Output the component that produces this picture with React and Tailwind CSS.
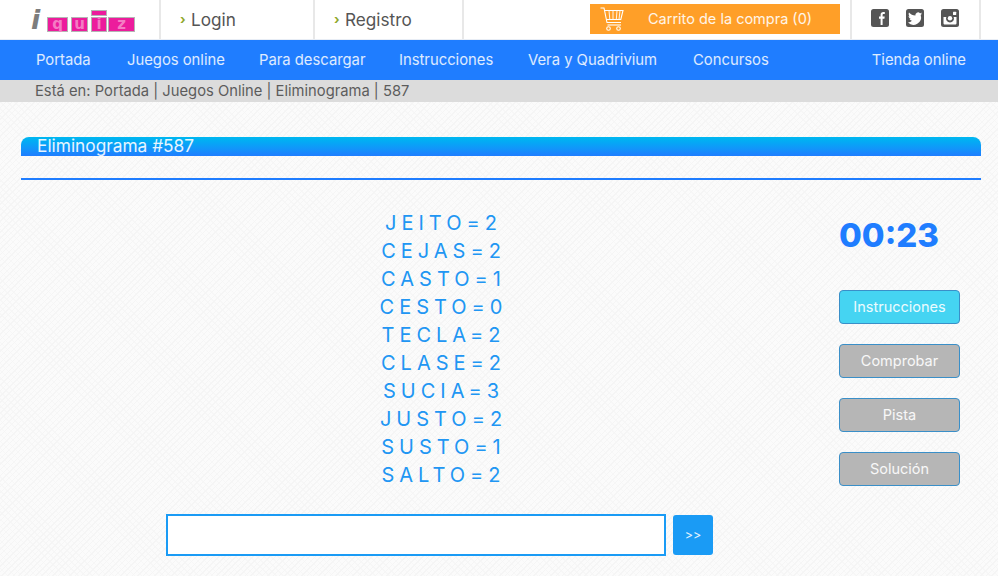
const font = { fontFamily: 'Inter, "Noto Sans", sans-serif' };

function LogoBlock({ className, children }) {
  return (
    <span className={`flex items-center justify-center bg-[#ec1c9c] border border-[#b4b4b4] text-[15px] font-bold leading-none text-[#f47cc4] ${className}`}>
      {children}
    </span>
  );
}

function Logo() {
  return (
    <div className="flex items-end h-[24px] w-[107px] select-none" style={{ fontFamily: '"DejaVu Sans", sans-serif' }}>
      <span className="w-[16px] text-[27px] font-bold italic text-[#7d7d7d] leading-[24px]">i</span>
      <LogoBlock className="w-[21px] h-[15px]">q</LogoBlock>
      <LogoBlock className="w-[17px] h-[15px] ml-[3px]">u</LogoBlock>
      <div className="w-[16px] ml-[3px] flex flex-col items-center gap-[1px]">
        <span className="block w-[16px] h-[6px] bg-[#ec1c9c] border border-[#b4b4b4]" />
        <LogoBlock className="w-[16px] h-[15px]">i</LogoBlock>
      </div>
      <LogoBlock className="w-[27px] h-[15px] ml-[1px]">z</LogoBlock>
    </div>
  );
}

function Cart() {
  return (
    <svg width="24" height="24" viewBox="0 0 24 24" fill="none" stroke="#fff" strokeWidth="1.1">
      <path d="M0.500 1h3.500l3 14.500h14" />
      <path d="M4.500 3.500h18.500l-2.200 9H6.600" />
      <path d="M9 3.500l.8 9M13 3.500v9M17 3.500l-.7 9M20 3.500l-1 9" strokeWidth="0.9" />
      <path d="M7.500 18h13.500" />
      <circle cx="8.500" cy="21.500" r="1.800" />
      <circle cx="18.500" cy="21.500" r="1.800" />
    </svg>
  );
}

function Social({ children }) {
  return (
    <svg width="18" height="18" viewBox="0 0 18 18">
      <rect width="18" height="18" rx="2.500" fill="#555" />
      {children}
    </svg>
  );
}

const nav = [
  ['Portada', 'w-[56px]'],
  ['Juegos online', 'w-[97px]'],
  ['Para descargar', 'w-[105px]'],
  ['Instrucciones', 'w-[94px]'],
  ['Vera y Quadrivium', 'w-[130px]'],
  ['Concursos', 'w-[73px]'],
];

const words = ['JEITO=2', 'CEJAS=2', 'CASTO=1', 'CESTO=0', 'TECLA=2', 'CLASE=2', 'SUCIA=3', 'JUSTO=2', 'SUSTO=1', 'SALTO=2'];

function SideButton({ children, active }) {
  return (
    <button className={`h-[34px] w-[121px] rounded-[4px] border border-[#3a8fc8] text-[14.5px] text-white/90 ${active ? 'bg-[#45d4f2]' : 'bg-[#b6b6b6]'}`}>
      {children}
    </button>
  );
}

export default function App() {
  return (
    <div
      className="w-[998px] h-[576px] overflow-hidden bg-[#fbfbfb] bg-[repeating-linear-gradient(135deg,#f5f5f5_0,#f5f5f5_1px,transparent_1px,transparent_4px),repeating-linear-gradient(45deg,#f7f7f7_0,#f7f7f7_1px,transparent_1px,transparent_5px)]"
      style={font}
    >
      <header className="h-[40px] bg-white flex border-b border-[#e8edf5]">
        <div className="w-[161px] border-r-2 border-[#e8e8e8] pl-[31px] pt-[8px]">
          <Logo />
        </div>
        <div className="w-[154px] border-r-2 border-[#e8e8e8] flex items-center pl-[19px] text-[17.200px] text-[#555]">
          <span className="text-[#8fa82a] font-bold text-[13px] w-[11px]">›</span>
          <span>Login</span>
        </div>
        <div className="w-[149px] border-r-2 border-[#e8e8e8] flex items-center pl-[19px] text-[17.200px] text-[#555]">
          <span className="text-[#8fa82a] font-bold text-[13px] w-[11px]">›</span>
          <span>Registro</span>
        </div>
        <div className="w-[126px]" />
        <div className="w-[250px] h-[30px] mt-[4px] bg-[#ff9f28] flex items-center pl-[10px] text-white/90 text-[14.500px]">
          <Cart />
          <span className="ml-[24px]">Carrito de la compra (0)</span>
        </div>
        <div className="w-[10px]" />
        <div className="w-[131px] border-l-2 border-r-2 border-[#e8e8e8] flex items-start pt-[9px] pl-[19px] gap-[17px]">
          <Social>
            <path fill="#fff" d="M9.600 16V9.800H8V7.500h1.600V5.800C9.600 4 10.700 3 12.300 3c.7 0 1.300.05 1.500.1v2h-1.100c-.9 0-1.100.4-1.100 1.100v1.300h2.100l-.3 2.300h-1.800V16z" />
          </Social>
          <Social>
            <path fill="#fff" d="M16 4.600c-.5.2-1 .4-1.500.4.600-.3 1-.8 1.200-1.500-.5.300-1.100.5-1.700.7a2.700 2.700 0 0 0-4.600 2.400C6.700 6.500 4.800 5.500 3 3.500c-.7 1.200-.3 3.200.8 3.900-.4 0-.8-.1-1.200-.3 0 1.300.9 2.400 2.100 2.700-.4.100-.8.100-1.200 0 .3 1.100 1.300 1.800 2.500 1.900A5.400 5.400 0 0 1 2 13.500 7.600 7.600 0 0 0 14.700 6c.5-.4 1-.9 1.300-1.400z" />
          </Social>
          <Social>
            <path fill="#fff" d="M2.500 8H5.300a4 4 0 1 0 7.400 0h2.800v6.200c0 .7-.6 1.300-1.300 1.300H3.800c-.7 0-1.300-.6-1.300-1.300z" />
            <circle cx="9" cy="9.300" r="2.200" fill="#fff" />
            <rect x="12" y="2.800" width="3.200" height="3.200" rx=".5" fill="#fff" />
          </Social>
        </div>
      </header>

      <nav className="h-[40px] bg-[#1f7dff] flex items-center pl-[36px] gap-[35px] text-[14.800px] text-white/85">
        {nav.map(([label, w]) => (
          <span key={label} className={`${w} whitespace-nowrap`}>{label}</span>
        ))}
        <span className="ml-auto mr-[32px] whitespace-nowrap">Tienda online</span>
      </nav>

      <div className="h-[22px] bg-[#dcdcdc] pl-[35px] text-[14.750px] leading-[22px] text-[#5c5c5c]">
        Está en: Portada | Juegos Online | Eliminograma | 587
      </div>

      <main className="px-[21px] pr-[17px] pt-[35px]">
        <div className="w-[960px] h-[19px] rounded-t-[8px] bg-gradient-to-b from-[#00b8f0] to-[#1f7dff] pl-[16px] text-[17.300px] leading-[18px] text-white/90">
          Eliminograma #587
        </div>
        <div className="w-[960px] h-[2px] bg-[#1f7dff] mt-[22px]" />

        <div className="flex w-[960px]">
          <div className="w-[818px] pl-[22px]">
            <div className="pt-[29px] flex flex-col items-center text-[20px] leading-[28px] tracking-[5px] text-[#2196f3] pl-[5px]">
              {words.map((w) => (
                <div key={w}>{w}</div>
              ))}
            </div>
            <div className="mt-[25px] flex justify-center gap-[7px] pr-[3px]">
              <div className="w-[500px] h-[42px] bg-white border-2 border-[#1a9bf5]" />
              <button className="w-[40px] h-[40px] mt-[1px] rounded-[3px] bg-[#1a9bf5] text-[12.500px] text-white/90">&gt;&gt;</button>
            </div>
          </div>
          <div className="w-[121px] flex flex-col">
            <div className="mt-[32px] h-[46px] text-[33px] leading-[46px] font-extrabold text-[#1f7dff] whitespace-nowrap">00:23</div>
            <div className="mt-[32px] flex flex-col gap-[20px]">
              <SideButton active>Instrucciones</SideButton>
              <SideButton>Comprobar</SideButton>
              <SideButton>Pista</SideButton>
              <SideButton>Solución</SideButton>
            </div>
          </div>
        </div>
      </main>
    </div>
  );
}
